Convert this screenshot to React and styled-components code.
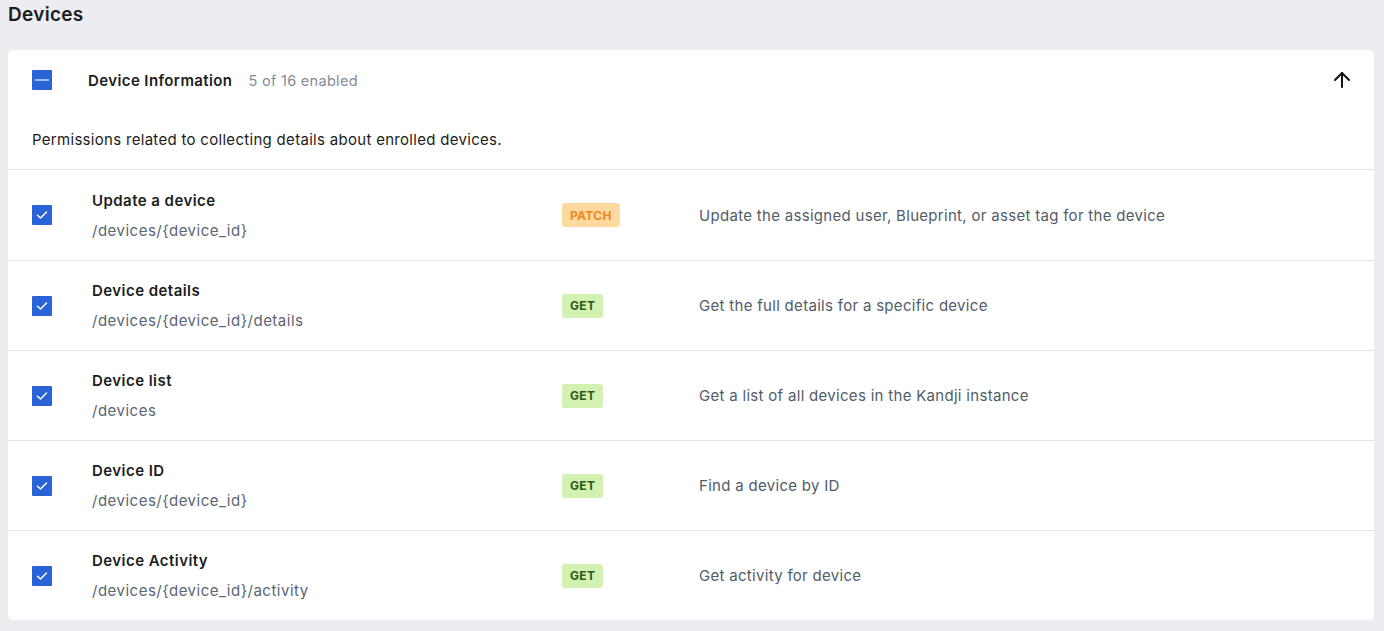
import React from 'react';
import styled, { createGlobalStyle } from 'styled-components';
import { ArrowUp } from 'lucide-react';

const GlobalStyle = createGlobalStyle`
  body {
    margin: 0;
    background: #ececf1;
    font-family: Inter, "Open Sans", sans-serif;
    color: #1b1d21;
  }
`;

const Page = styled.div`
  padding: 0 10px 12px 8px;
`;

const Title = styled.h1`
  margin: 0;
  height: 50px;
  padding-top: 3px;
  box-sizing: border-box;
  font-size: 19px;
  font-weight: 600;
  letter-spacing: 0.3px;
`;

const Card = styled.div`
  background: #fff;
  border-radius: 5px;
  overflow: hidden;
`;

const Header = styled.div`
  display: flex;
  align-items: center;
  height: 60px;
  padding: 0 20px 0 24px;
`;

const Box = styled.span`
  width: 20px;
  height: 20px;
  flex: none;
  background: #2a63d8;
  display: flex;
  align-items: center;
  justify-content: center;
  border-radius: 1px;
`;

const Dash = styled.span`
  width: 14px;
  height: 2px;
  background: #9fbcf0;
`;

const GroupName = styled.span`
  margin-left: 36px;
  font-size: 15px;
  font-weight: 600;
  letter-spacing: 0.4px;
`;

const Count = styled.span`
  margin-left: 16px;
  font-size: 14.5px;
  letter-spacing: 0.3px;
  color: #868b95;
`;

const Toggle = styled.button`
  margin-left: auto;
  background: none;
  border: 0;
  padding: 0;
  display: flex;
  color: #111;
`;

const Intro = styled.p`
  margin: 0;
  height: 60px;
  padding: 0 24px;
  display: flex;
  align-items: center;
  box-sizing: border-box;
  font-size: 15px;
  letter-spacing: 0.3px;
  border-bottom: 1px solid #e4e5ec;
`;

const Row = styled.div`
  display: grid;
  grid-template-columns: 60px 470px 137px 1fr;
  align-items: center;
  height: 90px;
  padding-left: 24px;
  box-sizing: border-box;
  & + & {
    border-top: 1px solid #e4e5ec;
  }
`;

const Endpoint = styled.div`
  display: flex;
  flex-direction: column;
  gap: 11px;
`;

const Name = styled.span`
  font-size: 15px;
  font-weight: 600;
  letter-spacing: 0.45px;
`;

const Path = styled.span`
  font-size: 15px;
  letter-spacing: 0.5px;
  color: #5b6572;
`;

const Method = styled.span`
  justify-self: start;
  height: 24px;
  padding: 0 8px;
  display: flex;
  align-items: center;
  border-radius: 3px;
  font-size: 12px;
  font-weight: 700;
  letter-spacing: 0.3px;
  background: ${p => (p.$kind === 'PATCH' ? '#fed9a0' : '#d3f1b0')};
  color: ${p => (p.$kind === 'PATCH' ? '#ee8a1e' : '#2a5a1a')};
`;

const Summary = styled.span`
  font-size: 15px;
  letter-spacing: 0.3px;
  color: #525c69;
`;

const Check = () => (
  <Box>
    <svg width="12" height="10" viewBox="0 0 12 10">
      <path d="M1.5 5.2 L4.5 8 L10.5 2" fill="none" stroke="#fff" strokeWidth="1.5" strokeLinecap="round" strokeLinejoin="round" />
    </svg>
  </Box>
);

const endpoints = [
  { name: 'Update a device', path: '/devices/{device_id}', method: 'PATCH', text: 'Update the assigned user, Blueprint, or asset tag for the device' },
  { name: 'Device details', path: '/devices/{device_id}/details', method: 'GET', text: 'Get the full details for a specific device' },
  { name: 'Device list', path: '/devices', method: 'GET', text: 'Get a list of all devices in the Kandji instance' },
  { name: 'Device ID', path: '/devices/{device_id}', method: 'GET', text: 'Find a device by ID' },
  { name: 'Device Activity', path: '/devices/{device_id}/activity', method: 'GET', text: 'Get activity for device' },
];

export default function App() {
  return (
    <Page>
      <GlobalStyle />
      <Title>Devices</Title>
      <Card>
        <Header>
          <Box><Dash /></Box>
          <GroupName>Device Information</GroupName>
          <Count>5 of 16 enabled</Count>
          <Toggle><ArrowUp size={24} strokeWidth={2} /></Toggle>
        </Header>
        <Intro>Permissions related to collecting details about enrolled devices.</Intro>
        {endpoints.map(e => (
          <Row key={e.name}>
            <Check />
            <Endpoint>
              <Name>{e.name}</Name>
              <Path>{e.path}</Path>
            </Endpoint>
            <Method $kind={e.method}>{e.method}</Method>
            <Summary>{e.text}</Summary>
          </Row>
        ))}
      </Card>
    </Page>
  );
}
